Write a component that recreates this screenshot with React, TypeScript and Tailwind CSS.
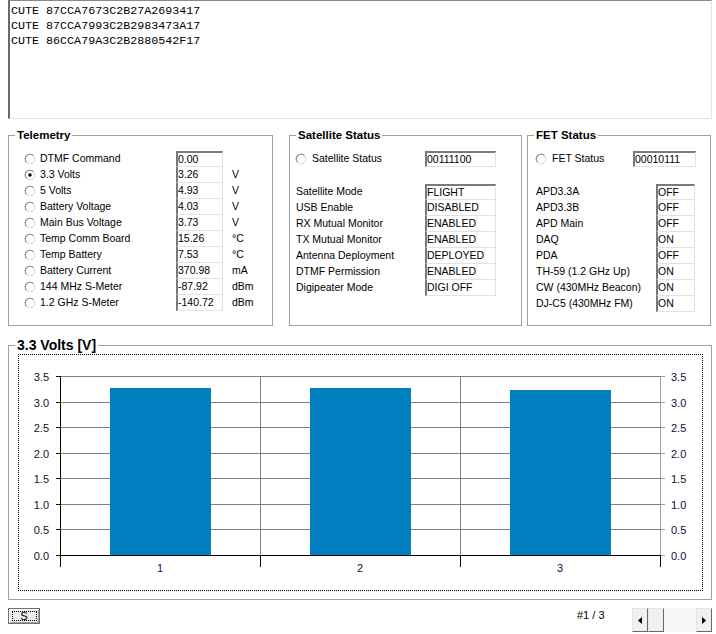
import clsx from 'clsx';

type Row = { label: string; value: string; unit?: string; checked?: boolean };

const telemetry: Row[] = [
  { label: 'DTMF Command', value: '0.00' },
  { label: '3.3 Volts', value: '3.26', unit: 'V', checked: true },
  { label: '5 Volts', value: '4.93', unit: 'V' },
  { label: 'Battery Voltage', value: '4.03', unit: 'V' },
  { label: 'Main Bus Voltage', value: '3.73', unit: 'V' },
  { label: 'Temp Comm Board', value: '15.26', unit: '°C' },
  { label: 'Temp Battery', value: '7.53', unit: '°C' },
  { label: 'Battery Current', value: '370.98', unit: 'mA' },
  { label: '144 MHz S-Meter', value: '-87.92', unit: 'dBm' },
  { label: '1.2 GHz S-Meter', value: '-140.72', unit: 'dBm' },
];

const satellite: Row[] = [
  { label: 'Satellite Mode', value: 'FLIGHT' },
  { label: 'USB Enable', value: 'DISABLED' },
  { label: 'RX Mutual Monitor', value: 'ENABLED' },
  { label: 'TX Mutual Monitor', value: 'ENABLED' },
  { label: 'Antenna Deployment', value: 'DEPLOYED' },
  { label: 'DTMF Permission', value: 'ENABLED' },
  { label: 'Digipeater Mode', value: 'DIGI OFF' },
];

const fet: Row[] = [
  { label: 'APD3.3A', value: 'OFF' },
  { label: 'APD3.3B', value: 'OFF' },
  { label: 'APD Main', value: 'OFF' },
  { label: 'DAQ', value: 'ON' },
  { label: 'PDA', value: 'OFF' },
  { label: 'TH-59 (1.2 GHz Up)', value: 'ON' },
  { label: 'CW (430MHz Beacon)', value: 'ON' },
  { label: 'DJ-C5 (430MHz FM)', value: 'ON' },
];

const packets = [
  'CUTE 87CCA7673C2B27A2693417',
  'CUTE 87CCA7993C2B2983473A17',
  'CUTE 86CCA79A3C2B2880542F17',
];

function Radio({ checked }: { checked?: boolean }) {
  return (
    <svg width="12" height="12" viewBox="0 0 12 12" className="shrink-0">
      <circle cx="6" cy="6" r="4.8" fill="#fff" stroke="#d4d4d4" />
      <path d="M2.6 9.4 A4.8 4.8 0 0 1 9.4 2.6" stroke="#8a8a8a" fill="none" strokeWidth="1.1" />
      {checked && <circle cx="6" cy="6" r="1.7" fill="#000" />}
    </svg>
  );
}

function Field({ value, w, first }: { value: string; w: string; first?: boolean }) {
  return (
    <div
      className={clsx(
        'flex h-[16px] shrink-0 items-center border-b border-l-2 border-r border-b-[#e3e3e3] border-l-[#7a7a7a] border-r-[#e3e3e3] leading-none',
        first && 'border-t-2 border-t-[#7a7a7a]',
        w,
      )}
    >
      {value}
    </div>
  );
}

function GroupBox({
  title,
  className,
  children,
}: {
  title: string;
  className: string;
  children: React.ReactNode;
}) {
  return (
    <div className={clsx('relative h-[191px] shrink-0 border border-[#a0a0a0]', className)}>
      <span className="absolute left-[6px] top-[-8px] bg-white px-[2px] text-[11.5px] font-bold leading-[14px]">
        {title}
      </span>
      {children}
    </div>
  );
}

const ticks = [0, 0.5, 1, 1.5, 2, 2.5, 3, 3.5];
const bars = [3.27, 3.27, 3.23];
const yOf = (v: number) => Math.round(200 - v * 51.06);

function Chart() {
  return (
    <svg width="683" height="235" viewBox="0 0 683 235" className="block">
      {ticks.map(t => (
        <g key={t}>
          {t > 0 && <line x1="41" x2="641" y1={yOf(t) + 0.5} y2={yOf(t) + 0.5} stroke="#808080" />}
          <line x1="37" x2="41" y1={yOf(t) + 0.5} y2={yOf(t) + 0.5} stroke="#000" />
          <line x1="641" x2="646" y1={yOf(t) + 0.5} y2={yOf(t) + 0.5} stroke="#a0a0a0" />
          <text x="30" y={yOf(t) + 4.5} textAnchor="end" fontSize="11" fill="#101030" fontFamily="'Liberation Sans', Arial, sans-serif">
            {t.toFixed(1)}
          </text>
          <text x="652" y={yOf(t) + 4.5} fontSize="11" fill="#101030" fontFamily="'Liberation Sans', Arial, sans-serif">
            {t.toFixed(1)}
          </text>
        </g>
      ))}
      {[241, 441].map(x => (
        <g key={x}>
          <line x1={x + 0.5} x2={x + 0.5} y1={yOf(3.5)} y2="200" stroke="#808080" />
          <line x1={x + 0.5} x2={x + 0.5} y1="200" y2="212" stroke="#000" />
        </g>
      ))}
      <line x1="641.5" x2="641.5" y1={yOf(3.5)} y2="200" stroke="#a0a0a0" />
      <line x1="641.5" x2="641.5" y1="200" y2="212" stroke="#000" />
      {bars.map((v, i) => (
        <rect key={i} x={91 + i * 200} y={yOf(v)} width="101" height={200 - yOf(v)} fill="#0080c0" />
      ))}
      <line x1="37" x2="642" y1="200.5" y2="200.5" stroke="#000" />
      <line x1="41.5" x2="41.5" y1={yOf(3.5)} y2="212" stroke="#000" />
      {[1, 2, 3].map(n => (
        <text key={n} x={141 + (n - 1) * 200} y="217" textAnchor="middle" fontSize="11" fill="#201040" fontFamily="'Liberation Sans', Arial, sans-serif">
          {n}
        </text>
      ))}
    </svg>
  );
}

export default function App() {
  return (
    <div className="h-[634px] w-[716px] overflow-hidden bg-white font-['Liberation_Sans',Arial,sans-serif] text-[10.5px] text-black">
      {/* packet log */}
      <div className="ml-[8px] h-[119px] w-[704px] border-b border-l-2 border-r border-t border-b-[#e3e3e3] border-l-[#6a6a6a] border-r-[#e3e3e3] border-t-[#8a8a8a] pl-[1px] pt-[3px] font-['Liberation_Mono','Courier_New',monospace] text-[11.7px] leading-[15px]">
        {packets.map(p => (
          <div key={p}>{p}</div>
        ))}
      </div>

      <div className="mt-[16px] flex">
        <GroupBox title="Telemetry" className="ml-[8px] w-[265px]">
          <div className="pl-[15px] pt-[15px]">
            {telemetry.map((r, i) => (
              <div key={r.label} className="flex h-[16px] items-center">
                <Radio checked={r.checked} />
                <span className="w-[140px] shrink-0 pl-[4px]">{r.label}</span>
                <Field value={r.value} w="w-[47px]" first={i === 0} />
                <span className="ml-[9px]">{r.unit}</span>
              </div>
            ))}
          </div>
        </GroupBox>

        <GroupBox title="Satellite Status" className="ml-[16px] w-[233px]">
          <div className="pl-[6px] pt-[15px]">
            <div className="-ml-[1px] flex h-[16px] items-center">
              <Radio />
              <span className="w-[118px] shrink-0 pl-[5px]">Satellite Status</span>
              <Field value="00111100" w="w-[71px]" first />
            </div>
            <div className="mt-[17px]">
              {satellite.map((r, i) => (
                <div key={r.label} className="flex h-[16px] items-center">
                  <span className="w-[129px] shrink-0">{r.label}</span>
                  <Field value={r.value} w="w-[71px]" first={i === 0} />
                </div>
              ))}
            </div>
          </div>
        </GroupBox>

        <GroupBox title="FET Status" className="ml-[5px] w-[184px]">
          <div className="pl-[8px] pt-[15px]">
            <div className="-ml-[1px] flex h-[16px] items-center">
              <Radio />
              <span className="w-[86px] shrink-0 pl-[5px]">FET Status</span>
              <Field value="00010111" w="w-[63px]" first />
            </div>
            <div className="mt-[17px]">
              {fet.map((r, i) => (
                <div key={r.label} className="flex h-[16px] items-center">
                  <span className="w-[120px] shrink-0">{r.label}</span>
                  <Field value={r.value} w="w-[39px]" first={i === 0} />
                </div>
              ))}
            </div>
          </div>
        </GroupBox>
      </div>

      {/* chart */}
      <div className="relative ml-[8px] mt-[19px] h-[255px] w-[704px] border border-[#a0a0a0]">
        <span className="absolute left-[6px] top-[-9px] bg-white px-[2px] text-[14px] font-bold leading-[16px]">
          3.3 Volts [V]
        </span>
        <div className="ml-[9px] mt-[8px] h-[237px] w-[685px] border border-dotted border-black">
          <Chart />
        </div>
      </div>

      {/* bottom bar */}
      <div className="mt-[8px] flex h-[24px] items-start">
        <button className="ml-[8px] flex h-[16px] w-[32px] items-center justify-center border border-[#707070] bg-[#ececec] p-[2px] shadow-[inset_1px_1px_0_#fff,inset_-1px_-1px_0_#a0a0a0]">
          <span className="flex h-[10px] w-[25px] items-center justify-center border border-dotted border-black text-[11px] leading-none">
            S
          </span>
        </button>
        <span className="ml-[537px] w-[55px] text-[11px] leading-[15px]">#1 / 3</span>
        <div className="flex h-[24px] w-[80px]">
          <div className="flex w-[16px] items-center justify-center border border-[#e3e3e3] border-b-[#696969] border-r-[#696969] bg-[#f0f0f0]">
            <svg width="4" height="7" viewBox="0 0 4 7">
              <polygon points="4,0 4,7 0,3.5" fill="#000" />
            </svg>
          </div>
          <div className="w-[16px] border border-[#e3e3e3] border-b-[#696969] border-r-[#696969] bg-[#f0f0f0]" />
          <div className="w-[32px] bg-[#f7f7f7]" />
          <div className="flex w-[16px] items-center justify-center border border-[#e3e3e3] border-b-[#696969] border-r-[#696969] bg-[#f0f0f0]">
            <svg width="4" height="7" viewBox="0 0 4 7">
              <polygon points="0,0 0,7 4,3.5" fill="#000" />
            </svg>
          </div>
        </div>
      </div>
    </div>
  );
}
